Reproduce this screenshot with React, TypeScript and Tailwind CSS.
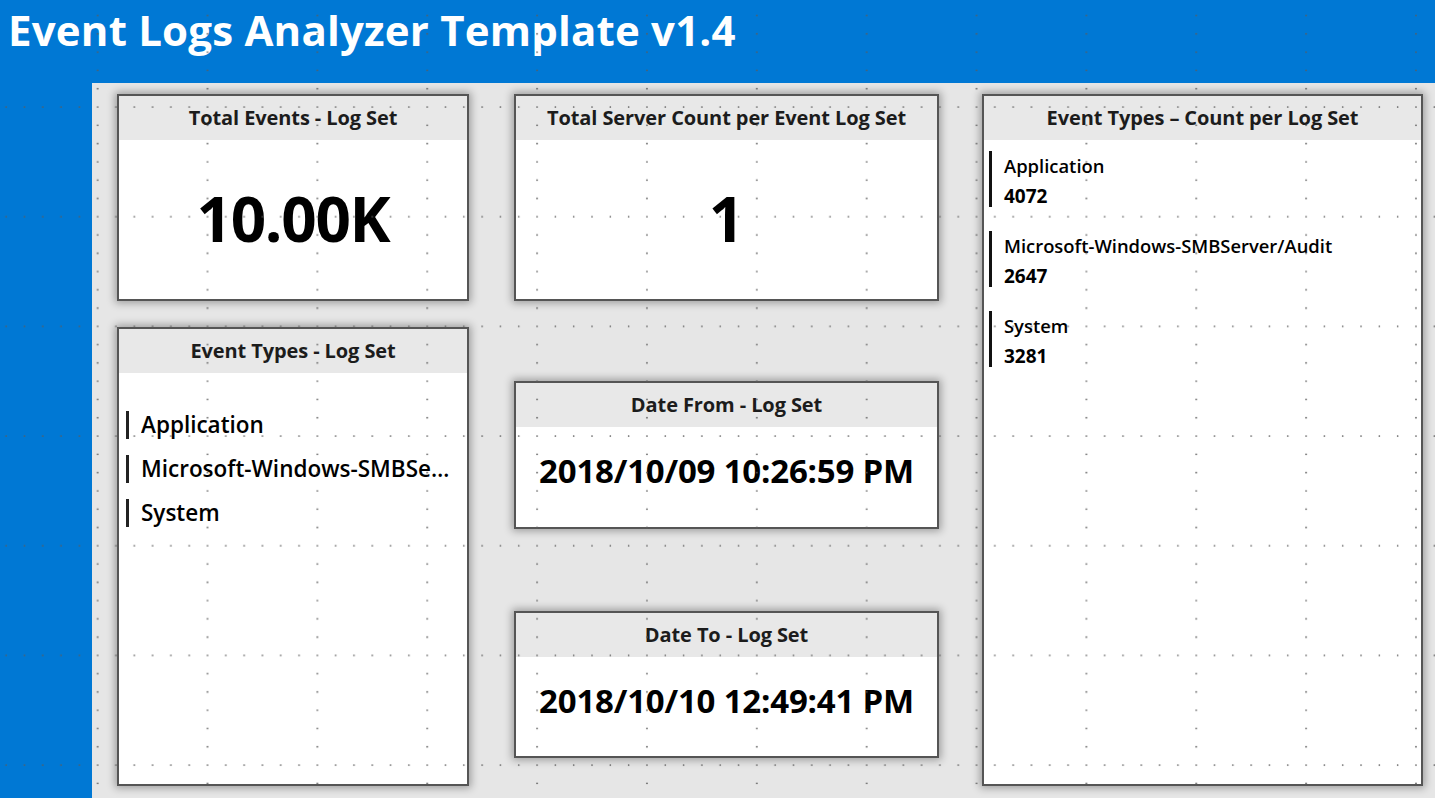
import React from 'react';

type CardProps = {
  title: string;
  className?: string;
  children?: React.ReactNode;
};

function Card({ title, className = '', children }: CardProps) {
  return (
    <div
      className={`flex flex-col border-2 border-[#555] bg-white shadow-[0_0_8px_2px_rgba(0,0,0,0.32)] ${className}`}
    >
      <div className="flex h-[44px] shrink-0 items-center justify-center bg-[#e8e8e8] text-[20px] font-bold tracking-[-0.1px] text-[#1c1c1c]">
        {title}
      </div>
      {children}
    </div>
  );
}

// designer canvas dots, drawn over everything like the Power BI edit view
function DotGrid() {
  const sx = 18.31;
  const sy = 18.28;
  const dots = [];
  for (let i = 0; i < 6; i++) dots.push(<circle key={'h' + i} cx={i * sx + 1} cy={1} r={0.85} />);
  for (let j = 1; j < 6; j++) dots.push(<circle key={'v' + j} cx={1} cy={j * sy + 1} r={0.85} />);

  return (
    <svg className="pointer-events-none absolute inset-0 h-full w-full" aria-hidden>
      <defs>
        <pattern id="dots" x={-13.2} y={-3.7} width={sx * 6} height={sy * 6} patternUnits="userSpaceOnUse">
          <g fill="#5b5b5b">{dots}</g>
        </pattern>
      </defs>
      <rect width="100%" height="100%" fill="url(#dots)" />
    </svg>
  );
}

const logTypes = ['Application', 'Microsoft-Windows-SMBServer/Audit', 'System'];

const typeCounts = [
  { name: 'Application', count: 4072 },
  { name: 'Microsoft-Windows-SMBServer/Audit', count: 2647 },
  { name: 'System', count: 3281 },
];

export default function App() {
  return (
    <div className="relative h-[798px] w-[1435px] overflow-hidden bg-[#0078d4] font-['Open_Sans','Noto_Sans',sans-serif] text-[#111]">
      <div className="flex h-[83px] items-start pl-[8px] pt-[2px]">
        <h1 className="text-[42px] font-bold leading-[56px] tracking-[0.2px] text-white">
          Event Logs Analyzer Template v1.4
        </h1>
      </div>

      <div className="flex">
        <div className="w-[92px] shrink-0" />
        <div className="flex h-[715px] flex-1 gap-[45px] bg-[#e6e6e6] pl-[25px] pt-[11px]">
          {/* left column */}
          <div className="flex w-[352px] flex-col">
            <Card title="Total Events - Log Set" className="h-[207px]">
              <div className="flex flex-1 items-center justify-center pb-[2px] text-[62px] font-bold tracking-[-1.3px] text-black">
                10.00K
              </div>
            </Card>

            <Card title="Event Types - Log Set" className="mt-[26px] h-[459px]">
              <ul className="flex flex-col gap-[12px] pl-[7px] pr-[8px] pt-[36px]">
                {logTypes.map((t) => (
                  <li key={t} className="flex h-[32px] items-center gap-[12px]">
                    <span className="h-[28px] w-[3px] shrink-0 bg-[#222]" />
                    <span className="min-w-0 truncate text-[22.5px] font-semibold leading-[32px] text-black">
                      {t}
                    </span>
                  </li>
                ))}
              </ul>
            </Card>
          </div>

          {/* middle column */}
          <div className="flex w-[425px] flex-col">
            <Card title="Total Server Count per Event Log Set" className="h-[207px]">
              <div className="flex flex-1 items-center justify-center pb-[2px] text-[62px] font-bold text-black">1</div>
            </Card>

            <Card title="Date From - Log Set" className="mt-[80px] h-[148px]">
              <div className="flex flex-1 items-center justify-center pb-[12px] text-[33px] font-bold tracking-[-0.2px] text-black">
                2018/10/09 10:26:59 PM
              </div>
            </Card>

            <Card title="Date To - Log Set" className="mt-[82px] h-[147px]">
              <div className="flex flex-1 items-center justify-center pb-[12px] text-[33px] font-bold tracking-[-0.2px] text-black">
                2018/10/10 12:49:41 PM
              </div>
            </Card>
          </div>

          {/* right column */}
          <div className="-ml-[2px] flex w-[441px] flex-col">
            <Card title="Event Types – Count per Log Set" className="h-[692px]">
              <div className="flex flex-col gap-[24px] pl-[5px] pt-[11px]">
                {typeCounts.map((t) => (
                  <div key={t.name} className="flex h-[56px] gap-[12px]">
                    <span className="w-[3px] shrink-0 bg-[#111]" />
                    <div className="flex flex-col justify-center gap-[6px] pt-[3px]">
                      <span className="text-[18.4px] font-semibold leading-[25px] text-black">{t.name}</span>
                      <span className="text-[19px] font-bold leading-[25px] text-black">{t.count}</span>
                    </div>
                  </div>
                ))}
              </div>
            </Card>
          </div>
        </div>
      </div>

      <DotGrid />
    </div>
  );
}
